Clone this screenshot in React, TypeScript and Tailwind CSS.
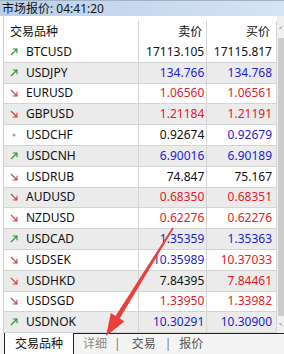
import React from "react";

type Row = { s: string; dir: "up" | "down" | "none"; b: string; bc: string; a: string; ac: string };

const K = "#111111";
const B = "#1e1ed2";
const R = "#e3202a";

const rows: Row[] = [
  { s: "BTCUSD", dir: "up", b: "17113.105", bc: K, a: "17115.817", ac: K },
  { s: "USDJPY", dir: "up", b: "134.766", bc: B, a: "134.768", ac: B },
  { s: "EURUSD", dir: "down", b: "1.06560", bc: R, a: "1.06561", ac: R },
  { s: "GBPUSD", dir: "down", b: "1.21184", bc: R, a: "1.21191", ac: R },
  { s: "USDCHF", dir: "none", b: "0.92674", bc: K, a: "0.92679", ac: B },
  { s: "USDCNH", dir: "up", b: "6.90016", bc: B, a: "6.90189", ac: B },
  { s: "USDRUB", dir: "down", b: "74.847", bc: K, a: "75.167", ac: K },
  { s: "AUDUSD", dir: "down", b: "0.68350", bc: R, a: "0.68351", ac: R },
  { s: "NZDUSD", dir: "down", b: "0.62276", bc: R, a: "0.62276", ac: R },
  { s: "USDCAD", dir: "up", b: "1.35359", bc: B, a: "1.35363", ac: B },
  { s: "USDSEK", dir: "down", b: "10.35989", bc: B, a: "10.37033", ac: R },
  { s: "USDHKD", dir: "down", b: "7.84395", bc: K, a: "7.84461", ac: R },
  { s: "USDSGD", dir: "down", b: "1.33950", bc: R, a: "1.33982", ac: R },
  { s: "USDNOK", dir: "up", b: "10.30291", bc: B, a: "10.30900", ac: B },
];

function Dir({ d }: { d: Row["dir"] }) {
  if (d === "none")
    return (
      <svg width="8" height="8" viewBox="0 0 8 8">
        <circle cx="4" cy="4" r="1.6" fill="#a8a8a8" />
      </svg>
    );
  if (d === "up")
    return (
      <svg width="8" height="8" viewBox="0 0 8 8">
        <path d="M1 7 L7 1 M2.8 1 H7 V5.2" stroke="#1f9a2a" strokeWidth="1.1" fill="none" />
      </svg>
    );
  return (
    <svg width="8" height="8" viewBox="0 0 8 8">
      <path d="M1 1 L7 7 M2.8 7 H7 V2.8" stroke="#d0403c" strokeWidth="1.1" fill="none" />
    </svg>
  );
}

export default function App() {
  return (
    <div className="relative w-[284px] h-[354px] overflow-hidden bg-white font-['Noto_Sans','Noto_Sans_CJK_SC',sans-serif] text-[12px] text-[#111]">
      {/* title */}
      <div className="h-[16px] border-t border-[#9fb2c8] bg-gradient-to-r from-[#b9cfe8] to-[#d6e4f3] pl-[2px] flex items-center leading-none text-[12px] text-[#141414]">
        市场报价: 04:41:20
      </div>
      <div className="flex h-[317px]">
        <div className="ml-[3px] w-[274px] border-l border-[#cfcfcf] flex flex-col">
          {/* header */}
          <div className="h-[26px] flex bg-white pt-[5px] shrink-0">
            <div className="w-[135px] border-r border-[#d4d4d4] flex items-center pl-[6px]">交易品种</div>
            <div className="w-[69px] border-r border-[#d4d4d4] flex items-center justify-end pr-[4px]">卖价</div>
            <div className="w-[70px] border-r border-[#d4d4d4] flex items-center justify-end pr-[6px]">买价</div>
          </div>
          {rows.map((r, i) => (
            <div
              key={r.s}
              className={`h-[20.8px] shrink-0 flex border-b border-[#d4d4d4] ${i % 2 === 1 ? "bg-[#ebebeb]" : "bg-white"}`}
            >
              <div className="w-[135px] border-r border-[#d4d4d4] flex items-center pl-[6px]">
                <span className="w-[16px] flex items-center justify-start">
                  <Dir d={r.dir} />
                </span>
                <span className="ml-[0px]">{r.s}</span>
              </div>
              <div
                className="w-[69px] border-r border-[#d4d4d4] flex items-center justify-end pr-[2px]"
                style={{ color: r.bc }}
              >
                {r.b}
              </div>
              <div
                className="w-[70px] border-r border-[#d4d4d4] flex items-center justify-end pr-[4px]"
                style={{ color: r.ac }}
              >
                {r.a}
              </div>
            </div>
          ))}
        </div>
        {/* scrollbar */}
        <div className="w-[7px] bg-[#f0f0f0] flex flex-col">
          <div className="h-[22px] flex items-center pl-[2px]">
            <svg width="5" height="5" viewBox="0 0 5 5">
              <path d="M0.5 4 L3 1.5" stroke="#707070" strokeWidth="1" fill="none" />
            </svg>
          </div>
          <div className="flex-1 bg-[#cdcdcd] ml-[1px]" />
          <div className="h-[17px] flex items-center pl-[2px]">
            <svg width="5" height="5" viewBox="0 0 5 5">
              <path d="M0.5 1 L3 3.5" stroke="#707070" strokeWidth="1" fill="none" />
            </svg>
          </div>
        </div>
      </div>
      {/* tabs */}
      <div className="h-[21px] flex items-stretch bg-[#f4f4f4] text-[12px]">
        <div className="ml-[4px] w-[70px] bg-white border-l border-r border-[#222] flex items-center justify-center text-[#111]">
          交易品种
        </div>
        <div className="flex-1 border-t border-[#222] flex items-center pl-[9px] text-[#555]">
          <span className="text-[#8a8a8a]">详细</span>
          <span className="ml-[7px] text-[#777]">|</span>
          <span className="ml-[11px]">交易</span>
          <span className="ml-[9px] text-[#777]">|</span>
          <span className="ml-[8px]">报价</span>
        </div>
      </div>
      {/* red annotation arrow */}
      <svg className="absolute left-0 top-0 pointer-events-none" width="284" height="354" viewBox="0 0 284 354">
        <polygon
          points="173.7,228.4 119.7,318.6 124.4,321.5 106,336 110.8,313.1 115.5,316.0 172.3,227.6"
          fill="#e8403a"
        />
      </svg>
    </div>
  );
}
